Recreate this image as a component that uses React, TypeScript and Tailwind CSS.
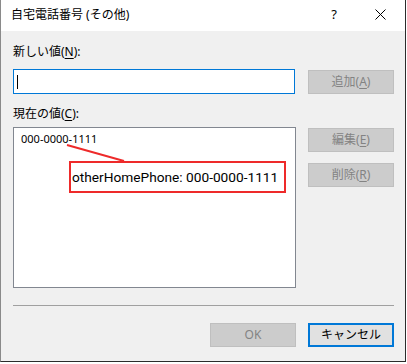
import React from 'react';

const ui = { fontFamily: '"Segoe UI", "Noto Sans", "Noto Sans CJK JP", sans-serif' };

const DisabledButton: React.FC<{ label: string; hotkey: string }> = ({ label, hotkey }) => (
  <div className="shrink-0 w-[86px] h-[24px] flex items-center justify-center bg-[#cccccc] border border-[#bfbfbf] text-[12px] text-[#838383]">
    {label}(<span className="underline underline-offset-2">{hotkey}</span>)
  </div>
);

const App: React.FC = () => {
  return (
    <div className="w-[407px] h-[364px] bg-white" style={ui}>
      <div className="w-[406px] h-[362px] border-l border-l-[#8a8a8a] border-r border-r-[#2b2b2b] border-b border-b-[#2b2b2b] bg-[#f0f0f0] flex flex-col">
        {/* title bar */}
        <div className="h-[31px] bg-white flex items-center pl-[10px] text-[12px] text-black">
          <span className="mt-[-2px]">自宅電話番号 (その他)</span>
          <span className="ml-auto w-[46px] text-center text-[13px] mt-[-2px]">?</span>
          <span className="w-[46px] flex justify-center mr-[2px]">
            <svg width="11" height="11" viewBox="0 0 11 11" className="mt-[-2px]">
              <path d="M0.5 0.5 L10.5 10.5 M10.5 0.5 L0.5 10.5" stroke="#000" strokeWidth="1" />
            </svg>
          </span>
        </div>

        <div className="pl-[12px] pr-[10px] pt-[13px] flex flex-col">
          <div className="h-[16px] leading-[16px] text-[12px] text-black">
            新しい値(<span className="underline underline-offset-2">N</span>):
          </div>
          <div className="mt-[9px] flex items-start">
            <div className="shrink-0 w-[282px] h-[25px] bg-white border border-[#0078d7] flex items-center pl-[3px]">
              <div className="w-px h-[14px] bg-black" />
            </div>
            <div className="ml-[13px] mt-[1px]">
              <DisabledButton label="追加" hotkey="A" />
            </div>
          </div>

          <div className="mt-[12px] h-[16px] leading-[16px] text-[12px] text-black">
            現在の値(<span className="underline underline-offset-2">C</span>):
          </div>
          <div className="mt-[5px] flex items-start">
            <div className="shrink-0 relative w-[283px] h-[161px] bg-white border border-[#828790]">
              <div className="pl-[7px] pt-[3px] text-[11px] leading-[16px] text-black">000-0000-1111</div>
              <svg className="absolute left-0 top-0" width="283" height="161">
                <line x1="53" y1="17" x2="110" y2="33" stroke="#ee2a2a" strokeWidth="2" />
              </svg>
              <div
                className="absolute left-[55px] top-[33px] w-[217px] h-[32px] border-2 border-[#ee2a2a] flex items-center pl-[1px] text-[13.7px] text-black whitespace-nowrap"
                style={{ fontFamily: 'Roboto, "Noto Sans", sans-serif' }}
              >
                otherHomePhone: 000-0000-1111
              </div>
            </div>
            <div className="ml-[12px] mt-[1px] flex flex-col gap-[11px]">
              <DisabledButton label="編集" hotkey="E" />
              <DisabledButton label="削除" hotkey="R" />
            </div>
          </div>

          <div className="mt-[17px] w-[381px] h-px bg-[#a0a0a0]" />

          <div className="mt-[17px] flex justify-end gap-[12px] w-[381px]">
            <div className="w-[86px] h-[24px] flex items-center justify-center bg-[#cccccc] border border-[#bfbfbf] text-[12px] text-[#838383]">
              OK
            </div>
            <div className="w-[86px] h-[24px] flex items-center justify-center bg-[#e1e1e1] border-2 border-[#0078d7] text-[12px] text-black">
              キャンセル
            </div>
          </div>
        </div>
      </div>
    </div>
  );
};

export default App;
